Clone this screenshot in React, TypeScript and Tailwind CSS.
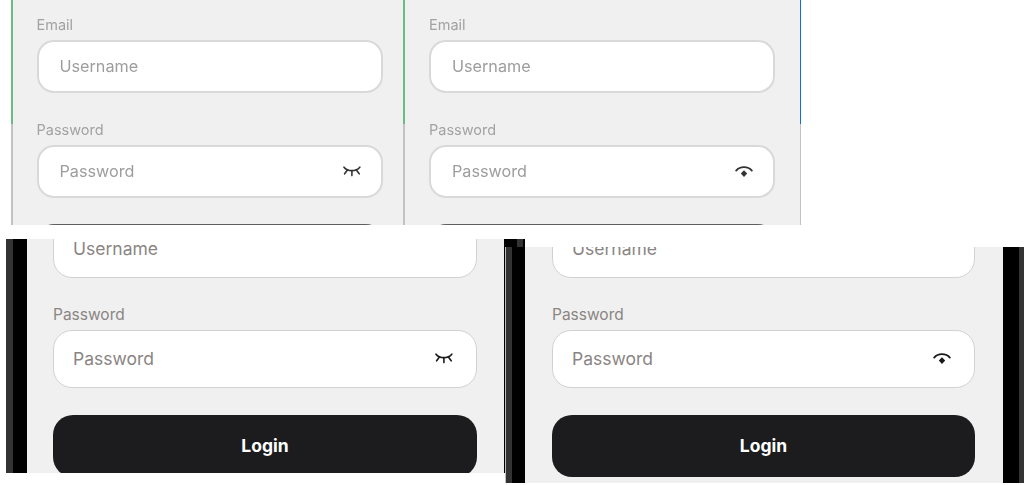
function EyeClosed() {
  return (
    <svg width="18" height="12" viewBox="0 0 18 12" fill="none" stroke="currentColor" strokeWidth="1.6" strokeLinecap="round">
      <path d="M1 1.2C4.5 5.8 13 5.8 16.8 1.2" />
      <path d="M4.6 3.8L1.6 7.8M13.2 3.8L16.2 7.8M8.9 5V9.6" />
    </svg>
  );
}

function EyeOpen() {
  return (
    <svg width="18" height="14" viewBox="0 0 18 14" fill="none">
      <path d="M1.2 5.6C5 1 13 1 16.8 5.6" stroke="currentColor" strokeWidth="1.8" strokeLinecap="round" />
      <path d="M9 5.2L12.2 8.6L9 12L5.8 8.6Z" fill="currentColor" />
    </svg>
  );
}

function TopForm({ open, className }: { open?: boolean; className: string }) {
  const label = "shrink-0 text-[14.5px] leading-5 text-[#a2a2a2]";
  const field =
    "flex h-[53px] shrink-0 items-center rounded-[17px] border-2 border-[#d9d9d9] bg-white pl-[21px] text-[16.2px] text-[#9d9d9d]";
  return (
    <div className={`flex flex-1 flex-col blur-[0.35px] ${className}`}>
      <div className={`mt-[15px] ${label}`}>Email</div>
      <div className={`mt-[5px] ${field}`}>Username</div>
      <div className={`mt-[27px] ${label}`}>Password</div>
      <div className={`mt-[5px] justify-between pr-[20px] ${field}`}>
        Password
        <span className="text-[#333333]">{open ? <EyeOpen /> : <EyeClosed />}</span>
      </div>
      <div className="mt-[26px] h-[40px] shrink-0 rounded-[17px] bg-[#5f5f5f]" />
    </div>
  );
}

function Edge({ top, className }: { top: string; className?: string }) {
  return (
    <div className={`flex w-[1.5px] shrink-0 flex-col ${className ?? ""}`}>
      <div className={`h-[124px] ${top}`} />
      <div className="flex-1 bg-[#c2c2c2]" />
    </div>
  );
}

function BottomForm({ open, className }: { open?: boolean; className: string }) {
  const field =
    "flex h-[58px] shrink-0 items-center rounded-[19px] border border-[#d2d2d2] bg-white pl-[19px] text-[17.5px] text-[#8a8583]";
  return (
    <div className={`flex min-w-0 flex-1 flex-col font-normal ${className}`}>
      <div className={field}>Username</div>
      <div className="mt-[27px] shrink-0 text-[15.5px] leading-5 text-[#8a8583]">Password</div>
      <div className={`mt-[5px] justify-between pr-[23px] ${field}`}>
        Password
        <span className="text-[#1a1a1a]">{open ? <EyeOpen /> : <EyeClosed />}</span>
      </div>
      <div className="mt-[27px] flex h-[62px] shrink-0 items-center justify-center rounded-[20px] bg-[#1c1c1e] text-[17.5px] font-bold text-white">
        Login
      </div>
    </div>
  );
}

function Bezel() {
  return (
    <div className="flex h-full w-[19px] shrink-0">
      <div className="w-[6px] bg-[#333333]" />
      <div className="flex-1 bg-black" />
    </div>
  );
}

export default function App() {
  return (
    <div className="relative h-[485px] w-[1034px] overflow-hidden bg-white font-['Inter',sans-serif]">
      {/* the picture is a collage of four phone captures, each placed on its own */}
      <div className="absolute left-[11px] top-0 flex h-[225px] w-[393px] overflow-hidden bg-[#f0f0f0]">
        <Edge top="bg-[#6dbb80]" />
        <TopForm className="pl-[24px] pr-[21px]" />
      </div>

      <div className="absolute left-[403px] top-0 flex h-[225px] w-[398px] overflow-hidden bg-[#f0f0f0]">
        <Edge top="bg-[#6dbb80]" />
        <TopForm open className="pl-[24.5px] pr-[24.5px]" />
        <Edge top="bg-[#0b6fe0]" />
      </div>

      <div className="absolute left-[6px] top-[239px] flex h-[234px] w-[519px] overflow-hidden bg-[#f0f0f0]">
        <div className="flex h-full w-[21px] shrink-0">
          <div className="w-[7px] bg-[#333333]" />
          <div className="flex-1 bg-black" />
        </div>
        <BottomForm className="-mt-[19px] pl-[26px] pr-[27px]" />
        <div className="flex h-full w-[21px] shrink-0 bg-black">
          <div className="ml-[13px] h-[8px] w-[6px] bg-[#333333]" />
        </div>
      </div>

      <div className="absolute left-[505px] top-[247px] flex h-[236px] w-[519px] overflow-hidden bg-[#f0f0f0]">
        <div className="h-full w-px shrink-0 bg-[#bdbdbd]" />
        <Bezel />
        <BottomForm open className="-mt-[27px] pl-[27px] pr-[28px]" />
        <div className="flex h-full w-[21px] shrink-0">
          <div className="w-[16px] bg-black" />
          <div className="flex-1 bg-[#333333]" />
        </div>
      </div>
    </div>
  );
}
